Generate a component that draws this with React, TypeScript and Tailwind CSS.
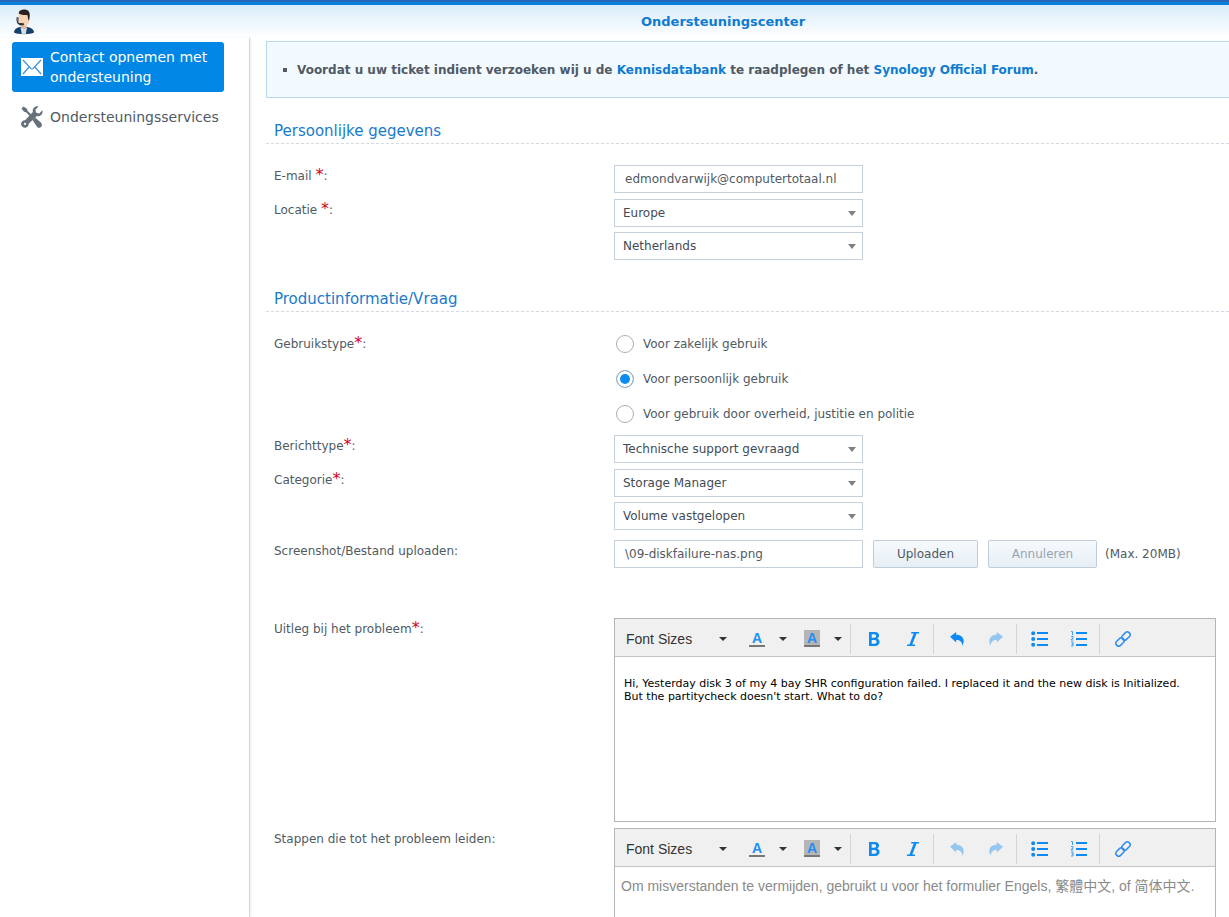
import { useState, type ReactNode } from "react"

function SupportAgentIcon() {
  return (
    <svg viewBox="0 0 24 26" className="w-6 shrink-0" aria-hidden="true">
      <path d="M2 23.500c0-3 2-4.600 6-5.500h7c4.500.9 7 2.500 7 5.500-3 2.300-17 2.300-20 0z" fill="#173f6b" />
      <path d="M8.500 18.500h6.500l-1.200 6.800H9.800z" fill="#cfdde9" />
      <path d="M9.500 14h5v4.500L12 20.500l-2.500-2z" fill="#e3b793" />
      <path d="M6.500 6c0-3 2-4.500 5.200-4.500S17 3 17 6v6.500c0 2.500-2.500 4.500-5.200 4.500s-5.300-2-5.300-4.500z" fill="#f5d3b3" />
      <path d="M6.700 4.500C7 1.500 9 .5 12 .5c4 0 6 2 5.800 6.500L17 12c-1.200-1.500-1-4.500-1.700-6-3.300.2-6-.2-8.600-1.500z" fill="#2a2220" />
      <path d="M5.500 8.500v4c0 2 1.500 2.700 4.500 2.800" fill="none" stroke="#33363c" strokeWidth="1.400" />
      <ellipse cx="9.500" cy="15.200" rx="2.800" ry="1.300" fill="#33363c" />
      <rect x="4.500" y="8" width="2" height="4.500" rx="1" fill="#5b5f65" />
    </svg>
  )
}

function MailIcon() {
  return (
    <svg viewBox="0 0 22 18" className="w-[22px] shrink-0" aria-hidden="true">
      <rect width="22" height="18" fill="#fff" />
      <path d="M2 2l7.800 8.300q1.200 1.200 2.400 0L20 2M2 16l6-7M20 16l-6-7" fill="none" stroke="#3c8fd6" strokeWidth="1.200" />
    </svg>
  )
}

function ToolsIcon() {
  return (
    <svg viewBox="0 0 22 22" className="w-[22px] shrink-0" aria-hidden="true">
      <path d="M.5 2.500l2-2 3.500 2.200.5 2 5 5-1.500 1.500-5-5-2-.5z" fill="#66717b" />
      <path d="M11.500 14l2.500-2.500 5.900 5c2.300 2.300.3 6-2.500 5.300-.6-.1-1-.5-1.400-1z" fill="#66717b" />
      <path
        d="M17.500.4c-3-.8-6.500 1.600-5.600 5.600L4 14.200c-3.500-.2-5.200 4-2.800 6.400 2.500 2.500 6.800.7 6.400-2.800L16 10c3.500.8 6.300-2.300 5.500-5.800l-3.300 3.300-3-.8-.8-3z"
        fill="#66717b"
      />
      <circle cx="4" cy="17.900" r="1.100" fill="#fff" />
    </svg>
  )
}

function Caret() {
  return (
    <svg viewBox="0 0 8 4" className="w-2 shrink-0" aria-hidden="true">
      <path d="M0 0h8L4 4z" fill="#333" />
    </svg>
  )
}

function BoldIcon() {
  return (
    <svg viewBox="0 0 12 14" className="w-3" aria-hidden="true">
      <path
        d="M1 0h5.800c5 0 5.400 5 2.300 6.600C13.200 8.200 12 14 7 14H1zM3.700 2.200v3.500h2.600c2.400 0 2.400-3.500 0-3.500zM3.700 7.900v3.900h3c2.600 0 2.600-3.900 0-3.900z"
        fill="#0d8bf2"
        fillRule="evenodd"
      />
    </svg>
  )
}

function ItalicIcon() {
  return (
    <svg viewBox="0 0 12 14" className="w-3" aria-hidden="true">
      <path d="M4.200.7H12M0 13.300h8" stroke="#0d8bf2" strokeWidth="1.400" />
      <path d="M8.500.5l-5 13" stroke="#0d8bf2" strokeWidth="2.600" />
    </svg>
  )
}

function UndoIcon() {
  return (
    <svg viewBox="0 0 14 14" className="w-3.5" aria-hidden="true">
      <path d="M0 4.800L6.200 0v2.800c6.500 0 9.500 5.200 6 11.200.2-4-2-6-6-6v2.500z" fill="#0d8bf2" />
    </svg>
  )
}

function BulletListIcon() {
  return (
    <svg viewBox="0 0 17 16" className="w-[17px]" aria-hidden="true">
      <g fill="#0d8bf2">
        <circle cx="2.200" cy="2.200" r="2" />
        <circle cx="2.200" cy="8" r="2" />
        <circle cx="2.200" cy="13.800" r="2" />
        <path d="M6 1h11v2H6zM6 7h11v2H6zM6 13h11v2H6z" />
      </g>
    </svg>
  )
}

function NumberListIcon() {
  return (
    <svg viewBox="0 0 17 16" className="w-[17px]" aria-hidden="true">
      <path d="M6 1h11v2H6zM6 7h11v2H6zM6 13h11v2H6z" fill="#0d8bf2" />
      <path
        d="M1 .5h1.500v3.500M1 5.500h2v1.700l-2 1.300v.5h2.500M1 11h2v4H1M1.500 13H3"
        fill="none"
        stroke="#3f9ff0"
        strokeWidth="1"
      />
    </svg>
  )
}

function LinkIcon() {
  return (
    <svg viewBox="0 0 18 18" className="w-[18px]" aria-hidden="true">
      <g fill="none" stroke="#2f8df0" strokeWidth="1.500">
        <rect x="-4.600" y="-2.800" width="9.200" height="5.600" rx="2.600" transform="translate(12 6) rotate(-45)" />
        <rect x="-4.600" y="-2.800" width="9.200" height="5.600" rx="2.600" transform="translate(6 12) rotate(-45)" />
      </g>
    </svg>
  )
}

function ToolButton({ label, disabled, children }: { label: string; disabled?: boolean; children: ReactNode }) {
  return (
    <button
      type="button"
      aria-label={label}
      disabled={disabled}
      className="flex h-8 w-[39px] items-center justify-center disabled:opacity-40"
    >
      {children}
    </button>
  )
}

function ColorButton({ label, filled }: { label: string; filled?: boolean }) {
  return (
    <div className="flex shrink-0">
      <button type="button" aria-label={label} className="flex h-8 w-8 items-center justify-center">
        <span
          className={`flex h-[17px] w-4 justify-center border-b-2 border-[#777] text-sm leading-4 font-bold text-[#1e8ff5] ${
            filled ? "bg-[#b5b5b5]" : ""
          }`}
        >
          A
        </span>
      </button>
      <button type="button" aria-label={`${label} menu`} className="flex h-8 w-5 items-center justify-center">
        <Caret />
      </button>
    </div>
  )
}

function ToolGroup({ children }: { children: ReactNode }) {
  return <div className="flex h-[30px] w-[83px] shrink-0 items-center border-l border-[#d4d4d4] pl-[3px]">{children}</div>
}

interface EditorProps {
  id: string
  defaultValue?: string
  placeholder?: string
  canUndo?: boolean
}

function Editor({ id, defaultValue, placeholder, canUndo }: EditorProps) {
  return (
    <div className="mr-[13px] min-w-0 flex-1 border border-[#b5b5b5] bg-white">
      <div className="flex h-[38px] items-center overflow-hidden border-b border-[#c4c4c4] bg-[#f0f0f0] pt-0.5 font-['Liberation_Sans',sans-serif]">
        <div className="flex w-[235px] shrink-0 gap-[3px]">
          <button type="button" className="flex h-8 w-[123px] items-center justify-between px-[11px] text-sm text-[#333]">
            Font Sizes
            <Caret />
          </button>
          <ColorButton label="Text color" />
          <ColorButton label="Background color" filled />
        </div>
        <ToolGroup>
          <ToolButton label="Bold">
            <BoldIcon />
          </ToolButton>
          <ToolButton label="Italic">
            <ItalicIcon />
          </ToolButton>
        </ToolGroup>
        <ToolGroup>
          <ToolButton label="Undo" disabled={!canUndo}>
            <UndoIcon />
          </ToolButton>
          <ToolButton label="Redo" disabled>
            <span className="-scale-x-100">
              <UndoIcon />
            </span>
          </ToolButton>
        </ToolGroup>
        <ToolGroup>
          <ToolButton label="Bullet list">
            <BulletListIcon />
          </ToolButton>
          <ToolButton label="Numbered list">
            <NumberListIcon />
          </ToolButton>
        </ToolGroup>
        <ToolGroup>
          <ToolButton label="Link">
            <LinkIcon />
          </ToolButton>
        </ToolGroup>
      </div>
      {placeholder ? (
        <textarea
          id={id}
          placeholder={placeholder}
          className="block h-[164px] w-full resize-none px-1.5 py-[9px] font-['Liberation_Sans','Noto_Sans_CJK_TC',sans-serif] text-sm leading-5 outline-none placeholder:text-[#8a8a8a]"
        />
      ) : (
        <textarea
          id={id}
          defaultValue={defaultValue}
          spellCheck={false}
          className="block h-[164px] w-full resize-none px-[9px] py-5 text-[11px] leading-[13px] text-black outline-none"
        />
      )}
    </div>
  )
}

function Row({ label, htmlFor, required, spaced, children }: {
  label: string
  htmlFor: string
  required?: boolean
  spaced?: boolean
  children: ReactNode
}) {
  return (
    <div className="flex items-start">
      <label htmlFor={htmlFor} className="w-[340px] shrink-0 leading-[23px]">
        {label}
        {spaced && " "}
        {required && <span className="text-base leading-none text-[#d0021b]">*</span>}:
      </label>
      {children}
    </div>
  )
}

function Select({ id, value, label }: { id: string; value: string; label?: string }) {
  return (
    <div className="relative w-[249px]">
      <select
        id={id}
        aria-label={label}
        className="block h-7 w-full appearance-none border border-[#c5d0da] bg-white px-2 text-[#414b55] outline-none"
      >
        <option>{value}</option>
      </select>
      <svg viewBox="0 0 8 5" className="pointer-events-none absolute top-3 right-[7px] w-2" aria-hidden="true">
        <path d="M0 0h8L4 5z" fill="#808080" />
      </svg>
    </div>
  )
}

function SectionTitle({ children }: { children: ReactNode }) {
  return (
    <h2 className="mb-[21px] border-b border-dashed border-[#d3dce4] pl-2 text-[15px] leading-6 text-[#1a7acb]">
      {children}
    </h2>
  )
}

const usageTypes = [
  { id: "business", label: "Voor zakelijk gebruik" },
  { id: "personal", label: "Voor persoonlijk gebruik" },
  { id: "government", label: "Voor gebruik door overheid, justitie en politie" },
]

const inputClass = "h-7 w-[249px] border border-[#c5d0da] bg-white px-2.5 text-[#505a64] outline-none"

export default function App() {
  const [usage, setUsage] = useState("personal")

  return (
    <div className="flex h-screen flex-col overflow-hidden border-t-2 border-[#2566b8] bg-white font-['DejaVu_Sans',sans-serif] text-xs text-[#505a64]">
      <header className="flex h-9 shrink-0 items-center border-t-[3px] border-[#0a80dc] bg-linear-to-b from-[#d9ecf9] to-white pl-3">
        <SupportAgentIcon />
        <h1 className="flex-1 pl-[181px] text-center text-[13px] font-bold text-[#0f7bd0]">Ondersteuningscenter</h1>
      </header>

      <div className="flex min-h-0 flex-1">
        <nav className="w-[250px] shrink-0 border-r border-[#d5d5d5] px-3 pt-1 text-sm leading-5 shadow-[1px_0_2px_rgba(0,0,0,0.08)]">
          <a href="#contact" className="mr-[13px] flex h-[50px] items-center gap-[7px] rounded-[3px] bg-[#0086e5] pl-[9px] text-white">
            <MailIcon />
            <span>Contact opnemen met ondersteuning</span>
          </a>
          <a href="#services" className="flex h-[50px] items-center gap-[7px] pl-[9px]">
            <ToolsIcon />
            Ondersteuningsservices
          </a>
        </nav>

        <main className="min-w-0 flex-1 overflow-hidden pt-[3px] pl-4">
          <ul className="mb-[21px] flex h-[57px] items-center border-y border-l border-[#b9d9e8] bg-[#f2f9ff] pl-4 font-bold">
            <li className="flex items-center gap-2.5">
              <span className="size-1 shrink-0 bg-[#505a64]" />
              <span>
                Voordat u uw ticket indient verzoeken wij u de{" "}
                <a href="#kb" className="text-[#0f7bd0]">Kennisdatabank</a> te raadplegen of het{" "}
                <a href="#forum" className="text-[#0f7bd0]">Synology Official Forum</a>.
              </span>
            </li>
          </ul>

          <section className="mb-[27px]">
            <SectionTitle>Persoonlijke gegevens</SectionTitle>
            <div className="flex flex-col gap-1.5 pl-2">
              <Row label="E-mail" htmlFor="email" required spaced>
                <input id="email" type="email" defaultValue="edmondvarwijk@computertotaal.nl" className={inputClass} />
              </Row>
              <Row label="Locatie" htmlFor="region" required spaced>
                <div className="flex flex-col gap-[5px]">
                  <Select id="region" value="Europe" />
                  <Select id="country" value="Netherlands" label="Land" />
                </div>
              </Row>
            </div>
          </section>

          <section>
            <SectionTitle>Productinformatie/Vraag</SectionTitle>
            <div className="flex flex-col gap-1.5 pl-2">
              <Row label="Gebruikstype" htmlFor="personal" required>
                <div className="mb-1 flex flex-col gap-[13px] pl-0.5">
                  {usageTypes.map((type) => (
                    <label key={type.id} htmlFor={type.id} className="flex h-[22px] items-center gap-[9px]">
                      <input
                        id={type.id}
                        type="radio"
                        name="usage"
                        checked={usage === type.id}
                        onChange={() => setUsage(type.id)}
                        className="size-[18px] appearance-none rounded-full border border-[#a9b0b6] bg-white checked:bg-[#0a8cf0] checked:shadow-[inset_0_0_0_3px_white]"
                      />
                      {type.label}
                    </label>
                  ))}
                </div>
              </Row>
              <Row label="Berichttype" htmlFor="message-type" required>
                <Select id="message-type" value="Technische support gevraagd" />
              </Row>
              <Row label="Categorie" htmlFor="category" required>
                <div className="mb-1 flex flex-col gap-[5px]">
                  <Select id="category" value="Storage Manager" />
                  <Select id="subcategory" value="Volume vastgelopen" label="Subcategorie" />
                </div>
              </Row>
              <Row label="Screenshot/Bestand uploaden" htmlFor="attachment">
                <div className="mb-11 flex items-center">
                  <input id="attachment" type="text" defaultValue="\09-diskfailure-nas.png" className={inputClass} />
                  <button
                    type="button"
                    className="ml-2.5 h-7 w-[105px] rounded-[2px] border border-[#c0ccd8] bg-linear-to-b from-[#f6fafd] to-[#e6eef5]"
                  >
                    Uploaden
                  </button>
                  <button
                    type="button"
                    disabled
                    className="ml-2.5 h-7 w-[109px] rounded-[2px] border border-[#c0ccd8] bg-linear-to-b from-[#f6fafd] to-[#e6eef5] text-[#9aa5b1]"
                  >
                    Annuleren
                  </button>
                  <span className="ml-2 whitespace-nowrap">(Max. 20MB)</span>
                </div>
              </Row>
              <Row label="Uitleg bij het probleem" htmlFor="problem" required>
                <Editor
                  id="problem"
                  canUndo
                  defaultValue={
                    "Hi, Yesterday disk 3 of my 4 bay SHR configuration failed. I replaced it and the new disk is Initialized.\nBut the partitycheck doesn't start. What to do?"
                  }
                />
              </Row>
              <Row label="Stappen die tot het probleem leiden" htmlFor="steps">
                <Editor
                  id="steps"
                  placeholder="Om misverstanden te vermijden, gebruikt u voor het formulier Engels, 繁體中文, of 简体中文."
                />
              </Row>
            </div>
          </section>
        </main>
      </div>
    </div>
  )
}
